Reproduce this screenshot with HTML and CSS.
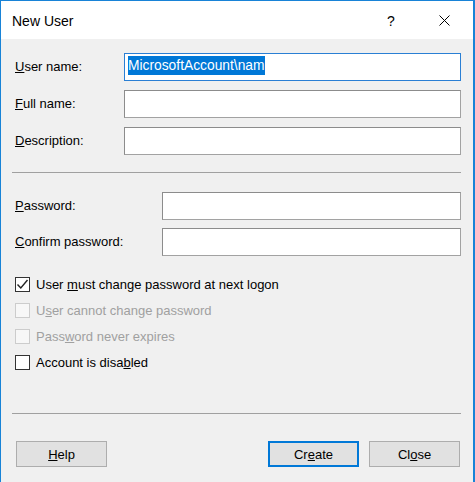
FILE: index.html
```html
<!DOCTYPE html>
<html>
<head>
<meta charset="utf-8">
<link rel="stylesheet" href="styles.css">
</head>
<body>
<div class="window">
  <div class="titlebar">
    <span class="title">New User</span>
    <span class="help-btn">?</span>
    <span class="close-btn">
      <svg width="11" height="11" viewBox="0 0 11 11"><path d="M0.5 0.5 L10.5 10.5 M10.5 0.5 L0.5 10.5" stroke="#000" stroke-width="1" fill="none"/></svg>
    </span>
  </div>
  <div class="content">
    <div class="grid grid-top">
      <label class="lbl"><u>U</u>ser name:</label>
      <div class="field focused"><span class="sel">MicrosoftAccount\nam</span></div>
      <label class="lbl"><u>F</u>ull name:</label>
      <div class="field"></div>
      <label class="lbl"><u>D</u>escription:</label>
      <div class="field"></div>
    </div>
    <div class="sep sep-top"></div>
    <div class="grid grid-pw">
      <label class="lbl"><u>P</u>assword:</label>
      <div class="field"></div>
      <label class="lbl"><u>C</u>onfirm password:</label>
      <div class="field"></div>
    </div>
    <div class="checks">
      <div class="chk">
        <span class="box">
          <svg width="13" height="13" viewBox="0 0 13 13"><path d="M1.5 6.5 L4.8 10 L11.5 2" stroke="#222" stroke-width="1.4" fill="none"/></svg>
        </span>
        <span>User <u>m</u>ust change password at next logon</span>
      </div>
      <div class="chk disabled">
        <span class="box"></span>
        <span>U<u>s</u>er cannot change password</span>
      </div>
      <div class="chk disabled">
        <span class="box"></span>
        <span>Pass<u>w</u>ord never expires</span>
      </div>
      <div class="chk">
        <span class="box"></span>
        <span>Account is disa<u>b</u>led</span>
      </div>
    </div>
    <div class="sep sep-bottom"></div>
    <div class="buttons">
      <button class="btn"><u>H</u>elp</button>
      <div class="spacer"></div>
      <button class="btn default">Cr<u>e</u>ate</button>
      <button class="btn">Cl<u>o</u>se</button>
    </div>
  </div>
</div>
</body>
</html>
```
FILE: styles.css
```css
html, body {
  margin: 0;
  padding: 0;
  background: #f0f0f0;
}
body {
  font-family: "Liberation Sans", Arial, sans-serif;
  font-size: 13px;
  color: #000;
}
u {
  text-decoration: underline;
  text-underline-offset: 1px;
}
.window {
  width: 475px;
  height: 482px;
  box-sizing: border-box;
  border-top: 1px solid #1883d7;
  border-left: 1px solid #1883d7;
  border-right: 2px solid #1883d7;
  background: #f0f0f0;
  display: flex;
  flex-direction: column;
  overflow: hidden;
}
.titlebar {
  height: 38px;
  background: #fff;
  display: flex;
  align-items: center;
  padding-left: 11px;
  flex-shrink: 0;
}
.title {
  font-size: 14px;
  color: #000;
  flex: 1;
  margin-top: 1px;
}
.help-btn {
  font-size: 14px;
  width: 8px;
  margin-right: 44px;
  margin-top: 1px;
}
.close-btn {
  width: 11px;
  height: 11px;
  margin-right: 23px;
  display: flex;
}
.content {
  padding: 14px 0 0 0;
}
.grid {
  display: grid;
  align-items: center;
  margin-left: 14px;
}
.grid-top {
  grid-template-columns: 109px 337px;
  grid-auto-rows: 28px;
  row-gap: 9px;
}
.grid-pw {
  grid-template-columns: 147px 299px;
  grid-auto-rows: 28px;
  row-gap: 8px;
  margin-top: 19px;
}
.lbl {
  line-height: 16px;
}
.field {
  height: 28px;
  box-sizing: border-box;
  background: #fff;
  border: 1px solid #a2a2a2;
  border-top-color: #8c8c8c;
  border-left-color: #8c8c8c;
  display: flex;
  align-items: flex-start;
}
.field.focused {
  border-color: #2a7fd4;
}
.sel {
  background: #0078d7;
  color: #fff;
  font-size: 13.8px;
  line-height: 19px;
  height: 19px;
  margin-left: 3px;
  margin-top: 2px;
  white-space: nowrap;
}
.sep {
  height: 1px;
  background: #a0a0a0;
  margin-left: 11px;
  width: 449px;
}
.sep-top {
  margin-top: 17px;
}
.checks {
  margin-top: 15px;
  margin-left: 14px;
  display: flex;
  flex-direction: column;
}
.chk {
  height: 26px;
  display: flex;
  align-items: center;
  gap: 6px;
}
.box {
  width: 15px;
  height: 15px;
  box-sizing: border-box;
  border: 1px solid #333;
  background: #fff;
  display: flex;
  align-items: center;
  justify-content: center;
  flex-shrink: 0;
}
.chk.disabled {
  color: #a0a0a0;
}
.chk.disabled .box {
  border-color: #cccccc;
  background: #f7f7f7;
}
.sep-bottom {
  margin-top: 38px;
}
.buttons {
  display: flex;
  margin-top: 27px;
  margin-left: 15px;
  width: 444px;
}
.spacer {
  flex: 1;
}
.btn {
  width: 91px;
  height: 26px;
  box-sizing: border-box;
  background: #e1e1e1;
  border: 1px solid #adadad;
  font-family: "Liberation Sans", Arial, sans-serif;
  font-size: 13px;
  color: #000;
  padding: 0;
  margin: 0;
}
.btn.default {
  border: 2px solid #0078d7;
  margin-right: 10px;
}
```
